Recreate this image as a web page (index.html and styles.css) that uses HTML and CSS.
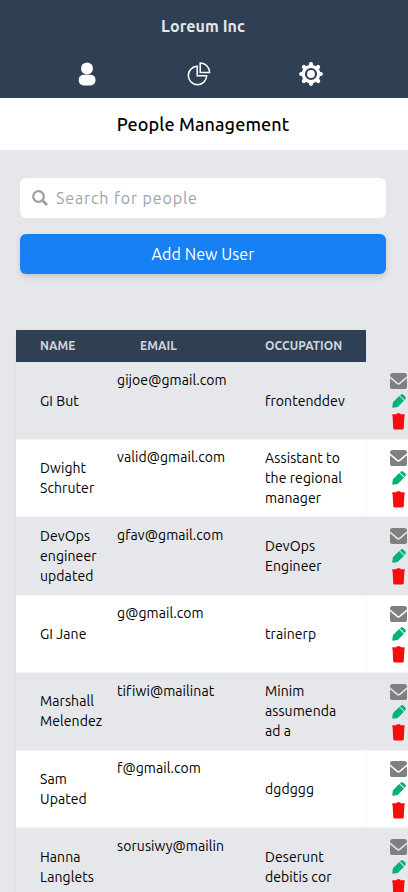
FILE: index.html
```html
<!DOCTYPE html>
<html lang="en">
<head>
<meta charset="utf-8">
<title>People Management</title>
<link rel="stylesheet" href="styles.css">
</head>
<body>
<svg class="sprite" aria-hidden="true">
  <symbol id="mail" viewBox="0 0 17 16"><rect width="17" height="16" rx="2.6" fill="#808080"/><path class="flap" d="M-.5 3.8 7.3 10.4Q8.5 11.4 9.7 10.4L17.5 3.8" fill="none" stroke-width="1.5"/></symbol>
  <symbol id="pencil" viewBox="0 0 14 14"><path fill="#05b17b" d="M.9 8.2 7.2 2 12 6.8 5.7 12.9 1.2 13.7Q.2 13.8.3 12.8ZM7.9 1.4 9 .5Q10.2-.4 11.4.7L13.3 2.6Q14.3 3.7 13.4 4.9L12.7 6.1Z"/></symbol>
  <symbol id="trash" viewBox="0 0 13 17"><path fill="#fb0c0c" d="M.8 1.3H4.3L5 .3H8L8.7 1.3H12.2Q12.7 1.3 12.7 1.8V3.2H.3V1.8Q.3 1.3.8 1.3ZM.6 3H12.4L11.8 15Q11.6 16.5 10.3 16.5H2.7Q1.4 16.5 1.2 15Z"/></symbol>
</svg>
<header class="top">
  <div class="brand">Loreum Inc</div>
  <nav class="nav">
    <svg width="24" height="24" viewBox="0 0 24 24" fill="#fff"><circle cx="12" cy="6.6" r="6"/><rect x="3.7" y="12.8" width="16.8" height="10.6" rx="5"/></svg>
    <svg width="24" height="24" viewBox="0 0 24 24" fill="none" stroke="#fff" stroke-width="1.5"><path d="M10.2 4.3A9.2 9.2 0 1 0 19.7 13.8H10.2Z"/><path d="M13.2.9A9.6 9.6 0 0 1 22.6 10.5H13.2Z"/></svg>
    <svg width="24" height="24" viewBox="0 0 24 24" fill="none" stroke="#fff"><circle cx="12" cy="12" r="7.7" stroke-width="3.2"/><circle cx="12" cy="12" r="3.9" fill="#fff" stroke="none"/><path stroke-width="4.2" stroke-linecap="round" d="M12 2.2V3M12 21V21.8M2.2 12H3M21 12H21.8M4.9 4.9l.8.8M18.3 18.3l.8.8M4.9 19.1l.8-.8M18.3 5.7l.8-.8"/></svg>
  </nav>
</header>
<h1 class="title">People Management</h1>
<main>
  <div class="tools">
    <div class="search">
      <svg width="16" height="16" viewBox="0 0 16 16" fill="none" stroke="#a0a0a0"><circle cx="6.5" cy="6.5" r="5.3" stroke-width="2.3"/><path d="m10.3 10.3 4.7 4.7" stroke-width="2.8"/></svg>
      <span>Search for people</span>
    </div>
    <button class="add">Add New User</button>
  </div>
  <section class="table">
    <div class="head"><span class="h-name">NAME</span><span class="h-email">EMAIL</span><span class="h-job">OCCUPATION</span></div>
    <div class="row first"><div class="name">GI But</div><div class="email">gijoe@gmail.com</div><div class="job">frontenddev</div><div class="acts"><svg class="mail"><use href="#mail"/></svg><svg class="pencil"><use href="#pencil"/></svg><svg class="trash"><use href="#trash"/></svg></div></div>
    <div class="row"><div class="name">Dwight<br>Schruter</div><div class="email">valid@gmail.com</div><div class="job">Assistant to<br>the regional<br>manager</div><div class="acts"><svg class="mail"><use href="#mail"/></svg><svg class="pencil"><use href="#pencil"/></svg><svg class="trash"><use href="#trash"/></svg></div></div>
    <div class="row"><div class="name">DevOps<br>engineer<br>updated</div><div class="email">gfav@gmail.com</div><div class="job">DevOps<br>Engineer</div><div class="acts"><svg class="mail"><use href="#mail"/></svg><svg class="pencil"><use href="#pencil"/></svg><svg class="trash"><use href="#trash"/></svg></div></div>
    <div class="row"><div class="name">GI Jane</div><div class="email">g@gmail.com</div><div class="job">trainerp</div><div class="acts"><svg class="mail"><use href="#mail"/></svg><svg class="pencil"><use href="#pencil"/></svg><svg class="trash"><use href="#trash"/></svg></div></div>
    <div class="row"><div class="name">Marshall<br>Melendez</div><div class="email">tifiwi@mailinat</div><div class="job">Minim<br>assumenda<br>ad a</div><div class="acts"><svg class="mail"><use href="#mail"/></svg><svg class="pencil"><use href="#pencil"/></svg><svg class="trash"><use href="#trash"/></svg></div></div>
    <div class="row"><div class="name">Sam<br>Upated</div><div class="email">f@gmail.com</div><div class="job">dgdggg</div><div class="acts"><svg class="mail"><use href="#mail"/></svg><svg class="pencil"><use href="#pencil"/></svg><svg class="trash"><use href="#trash"/></svg></div></div>
    <div class="row"><div class="name">Hanna<br>Langlets</div><div class="email">sorusiwy@mailin</div><div class="job">Deserunt<br>debitis cor</div><div class="acts"><svg class="mail"><use href="#mail"/></svg><svg class="pencil"><use href="#pencil"/></svg><svg class="trash"><use href="#trash"/></svg></div></div>
  </section>
</main>
</body>
</html>
```
FILE: styles.css
```css
* { box-sizing: border-box; }
html, body { height: 892px; overflow: hidden; }
body { margin: 0; background: #e5e7eb; color: #000; font-family: Ubuntu, "Noto Sans", sans-serif; }
svg { display: block; flex: none; }
.sprite { width: 0; height: 0; }
.top { height: 98px; background: #2f4055; }
.brand { height: 54px; line-height: 53px; text-align: center; font-size: 16px; font-weight: 700; letter-spacing: .08px; color: #e5e7eb; padding-right: 2px; }
.nav { display: flex; justify-content: space-between; padding: 8px 85px 0 75px; }
.title { margin: 0; height: 52px; line-height: 53px; background: #fff; text-align: center; font-size: 18px; font-weight: 500; letter-spacing: .12px; padding-right: 2px; }
.tools { display: flex; flex-direction: column; gap: 16px; margin: 28px 22px 0 20px; border-radius: 6px; box-shadow: 0 1px 2px rgba(0,0,0,.03); }
.search { display: flex; align-items: center; gap: 8px; height: 40px; padding: 0 12px; border-radius: 6px; background: #fff; color: #9ca3af; font-size: 16px; letter-spacing: .88px; }
.add { height: 40px; border: 0; border-radius: 6px; background: #1780f4; color: #fff; font: 16px Ubuntu, "Noto Sans", sans-serif; letter-spacing: .08px; box-shadow: 0 3px 6px rgba(0,0,0,.13); }
.table { width: 392px; margin: 56px 0 0 16px; box-shadow: 0 2px 6px rgba(0,0,0,.06); font-size: 14px; line-height: 20px; letter-spacing: .08px; }
.head { display: grid; grid-template-columns: 100px 125px 1fr; align-items: center; width: 350.4px; height: 32px; padding-left: 24px; background: #2f4055; color: #d1d5db; font-size: 12px; font-weight: 700; }
.row { display: grid; grid-template-columns: 101px 148px 102px 1fr; height: 77.75px; background: #e5e7eb; --cell: #e5e7eb; }
.row.first { height: 77.25px; }
.row:nth-child(odd) { background: #fff; --cell: #fff; box-shadow: inset 0 1px #f3f4f6, inset 0 -1px #f3f4f6; }
.row:nth-child(odd) .job { border-right: 1px solid #f3f4f6; }
.name, .job { display: flex; align-items: center; white-space: nowrap; }
.name { padding-left: 24px; }
.email { padding-top: 8.2px; }
.acts { padding: 11px 0 0 23px; }
.flap { stroke: var(--cell); }
.mail { width: 17px; height: 16px; }
.pencil { width: 14px; height: 14px; margin: 5px 0 0 1.5px; }
.trash { width: 13px; height: 17px; margin: 5.4px 0 0 2px; }
```
